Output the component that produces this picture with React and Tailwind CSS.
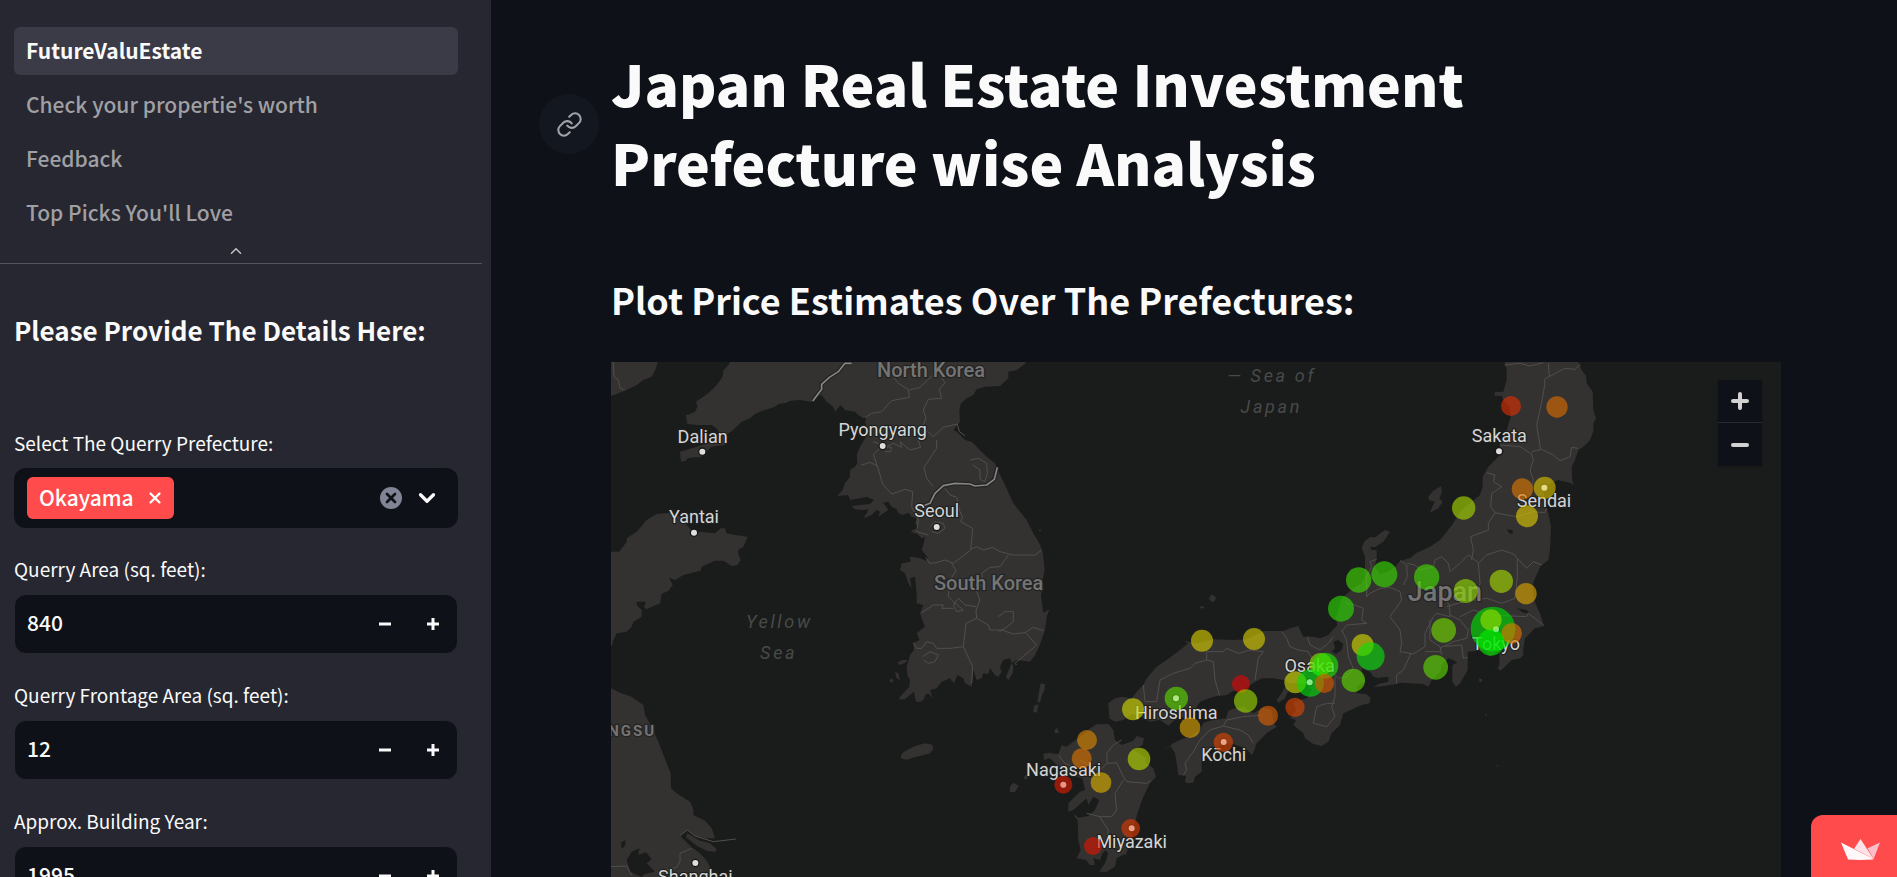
import React, { useState } from "react";
import { ChevronDown, ChevronUp, Link as LinkIcon, X } from "lucide-react";

const pages = ["FutureValuEstate", "Check your propertie's worth", "Feedback", "Top Picks You'll Love"];

function NumberField({ id, label, initial }) {
  const [value, setValue] = useState(initial);
  return (
    <div className="flex flex-col gap-1.5">
      <label htmlFor={id} className="flex h-9 items-center pb-0.5 text-[19px]">{label}</label>
      <div className="flex h-[60px] overflow-hidden rounded-xl border border-[#262730] bg-[#0e1117]">
        <input
          id={id}
          type="number"
          value={value}
          onChange={(e) => setValue(Number(e.target.value))}
          className="min-w-0 flex-1 bg-transparent px-3 pb-0.5 text-[21px] font-medium outline-none [appearance:textfield]"
        />
        <button aria-label={`Decrease ${label}`} onClick={() => setValue(value - 1)} className="flex w-12 items-center justify-center">
          <svg viewBox="0 0 12 12" className="size-3"><path d="M0 6H12" stroke="#fafafa" strokeWidth="3" /></svg>
        </button>
        <button aria-label={`Increase ${label}`} onClick={() => setValue(value + 1)} className="flex w-12 items-center justify-center">
          <svg viewBox="0 0 12 12" className="size-3"><path d="M0 6H12M6 0V12" stroke="#fafafa" strokeWidth="3" /></svg>
        </button>
      </div>
    </div>
  );
}

function Sidebar() {
  const [selected, setSelected] = useState(["Okayama"]);
  return (
    <aside className="w-[491px] shrink-0 overflow-hidden bg-[#262730]">
      <nav className="flex flex-col gap-1.5 pt-[27px] pr-[33px] pl-3.5">
        {pages.map((page, i) => (
          <a
            key={page}
            href="#"
            className={
              i === 0
                ? "flex h-12 items-center rounded-md bg-[#3b3b47] px-3 pb-px text-[21px] font-bold text-[#fafafa]"
                : "flex h-12 items-center rounded-md px-3 pb-px text-[21px] font-medium text-[#a0a0a4]"
            }
          >
            {page}
          </a>
        ))}
      </nav>
      <button aria-label="Collapse navigation" className="flex h-[26px] w-[472px] items-center justify-center pt-0.5 text-[#c3c3c6]">
        <ChevronUp size={18} strokeWidth={2} />
      </button>
      <hr className="mr-[9px] border-[#52535d]" />
      <div className="flex flex-col gap-6 pt-12 pr-[33px] pl-3.5">
        <h2 className="mb-[54px] text-[26px] leading-9 font-bold">Please Provide The Details Here:</h2>
        <div className="flex flex-col gap-1.5">
          <label htmlFor="prefecture" className="flex h-9 items-center pb-0.5 text-[19px]">Select The Querry Prefecture:</label>
          <div className="flex h-[60px] items-center rounded-xl bg-[#0e1117] pr-[18px] pl-[13px]">
            {selected.map((name) => (
              <span key={name} className="flex h-[42px] items-center gap-3 rounded-md bg-[#ff4b4b] pr-2.5 pl-3 text-[21px] font-medium text-white">
                <span className="pb-px">{name}</span>
                <button aria-label={`Remove ${name}`} onClick={() => setSelected([])} className="flex">
                  <X size={18} strokeWidth={3} />
                </button>
              </span>
            ))}
            <input id="prefecture" role="combobox" aria-expanded="false" aria-controls="prefecture-list" className="min-w-0 flex-1 bg-transparent px-2 outline-none" />
            <button aria-label="Clear all" onClick={() => setSelected([])} className="flex size-[22px] items-center justify-center rounded-full bg-[#808495] text-[#0e1117]">
              <X size={16} strokeWidth={4} />
            </button>
            <button aria-label="Open" className="ml-3 flex">
              <ChevronDown size={26} strokeWidth={3} />
            </button>
          </div>
        </div>
        <NumberField id="area" label="Querry Area (sq. feet):" initial={840} />
        <NumberField id="frontage" label="Querry Frontage Area (sq. feet):" initial={12} />
        <NumberField id="year" label="Approx. Building Year:" initial={1995} />
      </div>
    </aside>
  );
}

const land = [
  // Liaoning coast
  "33,36 173,36 168,55 155,80 130,90 110,105 75,122 33,138",
  // Liaodong and the Korean peninsula
  "388,36 388,42 370,62 368,80 350,105 330,125 310,140 288,155 292,170 285,185 270,192 258,195 262,222 290,225 335,225 355,240 350,270 290,290 240,305 243,335 258,332 262,325 280,322 300,322 320,303 335,290 375,285 380,265 378,255 400,240 425,215 450,205 465,192 480,185 525,170 535,162 560,158 570,152 600,150 635,155 650,142 665,135 680,155 700,170 705,185 722,165 735,180 765,185 775,195 790,205 800,200 795,215 805,250 780,290 770,315 772,340 765,350 750,360 750,380 735,400 728,420 712,438 745,435 750,450 780,445 800,440 822,450 810,462 755,468 765,478 790,480 805,478 800,490 790,505 815,495 830,480 840,485 835,500 850,490 865,480 855,465 848,458 865,455 875,470 890,478 895,490 910,495 925,488 935,500 950,505 945,520 955,535 950,550 965,565 975,560 970,585 965,600 985,625 978,632 960,625 945,622 930,620 932,635 905,640 900,660 915,670 925,700 935,715 930,685 945,680 950,730 950,760 970,765 960,790 965,805 975,830 950,850 958,870 940,880 942,900 930,915 920,950 922,975 930,990 928,1010 900,1040 897,1048 915,1048 930,1035 942,1025 948,1055 962,1055 972,1048 975,1035 985,1030 998,1045 990,1020 1010,1015 1025,995 1050,985 1062,1000 1072,975 1090,985 1095,1000 1115,1010 1120,960 1130,990 1145,985 1150,970 1165,972 1170,955 1185,975 1195,980 1205,965 1200,950 1210,930 1230,925 1240,950 1238,970 1225,990 1218,980 1235,940 1250,930 1290,935 1305,915 1315,895 1325,870 1335,840 1340,800 1348,778 1330,788 1323,740 1328,690 1334,660 1328,605 1318,580 1300,550 1280,510 1240,460 1215,405 1200,375 1185,340 1160,320 1140,300 1115,275 1095,270 1070,245 1060,240 1080,215 1078,180 1083,160 1100,145 1120,135 1130,118 1155,110 1200,108 1225,85 1225,65 1250,60 1275,42 1277,36",
  // Shandong
  "33,605 58,605 80,575 80,565 110,545 140,510 170,492 215,488 240,500 265,530 285,550 300,545 345,550 362,535 374,535 380,550 405,555 443,560 430,590 415,600 415,612 422,630 412,645 395,648 370,632 345,632 305,650 302,662 250,675 225,690 207,683 218,705 205,722 185,732 180,760 140,777 132,772 138,755 110,755 110,765 125,780 125,800 100,815 95,830 80,845 50,850 40,870 36,888 33,888",
  // Jiangsu and Shanghai
  "33,1015 60,1028 95,1040 130,1065 135,1095 155,1130 175,1175 200,1240 212,1270 213,1315 230,1330 270,1355 280,1378 280,1395 315,1412 335,1435 345,1465 315,1465 285,1458 262,1440 240,1457 275,1492 300,1510 322,1535 333,1558 345,1600 400,1700 420,1800 330,1860 420,1900 440,2000 400,2150 330,2286 33,2286",
  "262,1450 300,1472 330,1480 350,1497 345,1506 320,1502 290,1487 258,1462",
  // Jeju
  "902,1218 908,1208 925,1198 945,1188 975,1180 997,1184 1000,1198 990,1210 960,1218 935,1224 920,1229 905,1226",
  // Tsushima and small islands
  "1322,1000 1335,1003 1333,1020 1325,1038 1320,1058 1312,1055 1318,1020",
  "1300,1087 1302,1068 1315,1062 1311,1087",
  "1230,1310 1240,1298 1256,1308 1245,1326 1230,1326",
  "1272,1280 1280,1272 1286,1282 1275,1290",
  "1365,1138 1372,1135 1378,1148 1364,1150",
  "1827,745 1835,733 1848,742 1845,752 1835,757",
  "1798,772 1806,768 1814,773 1806,776",
  "1315,540 1323,538 1321,546",
  "892,938 905,930 922,930 918,937 900,945",
  "868,990 876,985 880,995 872,998",
  "885,965 895,970 900,990 890,985",
  "932,543 945,537 955,543 945,552",
  "2637,985 2646,988 2645,997 2638,994",
  "2655,1091 2661,1092 2657,1098",
  "2688,1242 2698,1252 2692,1250",
  // Kyushu
  "1525,1122 1490,1123 1470,1135 1455,1150 1440,1160 1420,1175 1400,1190 1385,1185 1375,1213 1345,1208 1330,1212 1332,1230 1350,1225 1375,1250 1400,1262 1420,1278 1447,1285 1455,1320 1440,1325 1425,1340 1405,1360 1405,1385 1420,1380 1460,1345 1465,1365 1480,1340 1498,1350 1485,1380 1465,1398 1435,1403 1422,1392 1425,1402 1433,1410 1435,1470 1442,1500 1430,1525 1458,1530 1470,1545 1485,1545 1480,1525 1500,1530 1505,1515 1515,1500 1525,1510 1515,1540 1498,1565 1520,1565 1545,1550 1550,1525 1572,1513 1578,1515 1585,1490 1600,1440 1612,1390 1630,1340 1650,1300 1668,1280 1660,1255 1635,1235 1640,1225 1600,1200 1628,1185 1632,1165 1610,1158 1600,1172 1565,1185 1545,1170 1540,1140",
  // Shikoku
  "1685,1205 1720,1180 1745,1168 1765,1162 1800,1140 1810,1118 1840,1110 1878,1105 1885,1082 1905,1075 1930,1070 1960,1090 1990,1072 2015,1080 2022,1122 2030,1130 2000,1150 1985,1165 1970,1180 1965,1195 1957,1215 1935,1195 1900,1182 1880,1178 1850,1190 1820,1210 1805,1228 1805,1265 1785,1280 1780,1298 1762,1300 1755,1295 1758,1278 1735,1275 1730,1240 1725,1210 1712,1188",
  // Awaji
  "2045,1030 2055,1010 2068,1014 2055,1045 2035,1058 2030,1050",
  // Sado
  "2485,440 2500,422 2523,408 2525,430 2518,445 2528,455 2515,475 2490,488 2495,475 2505,455 2487,450",
  // Honshu
  "1525,1060 1545,1045 1565,1040 1595,1045 1610,1025 1630,1005 1640,985 1670,950 1700,930 1740,900 1765,880 1750,872 1790,880 1840,868 1900,870 1940,868 1990,843 2050,843 2070,835 2095,828 2100,840 2110,860 2140,860 2160,865 2185,855 2200,838 2212,825 2207,805 2215,780 2225,745 2260,715 2285,700 2295,680 2295,620 2285,592 2295,572 2310,562 2325,562 2355,540 2370,545 2350,575 2325,592 2310,590 2315,600 2330,600 2330,622 2325,650 2340,672 2365,665 2385,650 2400,633 2430,625 2450,608 2470,600 2490,590 2520,570 2540,545 2560,520 2580,485 2615,455 2640,435 2648,410 2648,380 2665,350 2695,320 2700,280 2720,240 2732,200 2728,170 2710,150 2705,138 2683,137 2685,126 2710,125 2720,90 2720,55 2713,45 2715,36 2935,36 2945,60 2958,78 2960,100 2978,125 2980,180 2988,205 2980,220 2980,245 2970,270 2950,290 2935,300 2925,330 2915,350 2917,392 2920,405 2910,398 2875,390 2850,400 2830,425 2838,470 2845,490 2853,530 2850,600 2845,630 2822,648 2805,685 2798,705 2800,740 2808,765 2820,790 2832,828 2805,835 2775,865 2770,895 2770,915 2760,925 2735,930 2710,955 2700,962 2693,955 2698,945 2698,915 2700,900 2670,920 2650,900 2630,903 2603,905 2603,960 2580,1000 2568,1010 2557,995 2557,945 2572,938 2560,930 2545,925 2525,945 2522,965 2495,990 2485,1010 2470,1002 2400,998 2390,1002 2350,1008 2320,1012 2335,1002 2365,995 2365,982 2340,985 2320,980 2310,965 2285,955 2285,970 2297,995 2272,1008 2270,1030 2300,1033 2312,1045 2308,1060 2285,1065 2230,1090 2220,1125 2195,1150 2185,1175 2165,1188 2140,1182 2115,1165 2110,1150 2080,1125 2088,1110 2070,1105 2088,1080 2080,1055 2120,1045 2135,1020 2115,1000 2070,1000 2050,990 2020,985 1985,985 1950,1005 1930,1020 1900,1022 1880,1035 1840,1040 1800,1055 1785,1080 1760,1105 1735,1100 1705,1127 1680,1110 1650,1115 1625,1100 1595,1092 1570,1110 1545,1115 1528,1105",
];

const water = [
  "80,1530 95,1505 118,1495 115,1515 138,1507 155,1528 140,1540 165,1565 135,1572 125,1581 90,1565",
  "62,1478 76,1470 76,1485 66,1497",
  "2200,875 2215,870 2230,882 2225,900 2208,912 2195,905 2205,895",
  "2720,538 2738,540 2738,552 2728,550",
  "2750,775 2780,780 2788,790 2770,788",
  "2340,982 2366,982 2362,995 2342,997",
];

const borders = [
  "40,36 42,80 55,90 60,115 74,120",
  "795,203 815,190 845,185 875,152 928,142 925,118 895,100 872,70",
  "928,120 960,112 985,88 1000,75",
  "1022,78 1035,98 1018,118 1025,145 985,148 970,180 978,205 968,230 1000,260 1030,232 1072,222 1078,245 1095,257",
  "1010,270 1010,295 990,325 972,352 980,385 1000,410",
  "820,275 860,290 880,280 905,292 900,275 930,300 962,292 955,270 975,258",
  "784,345 810,337 832,348 848,402 875,432 915,418 938,425 935,470 955,510 950,545 985,555",
  "832,350 820,312 845,290 875,292 872,305 855,305",
  "1110,330 1135,325 1160,340 1162,370 1155,395 1140,388 1140,360 1118,345",
  "1035,415 1050,435 1070,442 1080,485 1088,500 1082,515 1118,535 1112,600 1060,640 1035,630 1008,638 988,640 978,622",
  "990,530 1005,515 1030,520 1035,535 1015,550 995,545",
  "1112,598 1130,590 1150,600 1178,592 1200,605 1240,615 1305,615 1325,600",
  "1225,615 1200,650 1170,652 1145,670 1150,700 1128,720 1140,750 1128,780 1130,805 1098,820 1090,890 1118,950 1115,1000",
  "1055,640 1068,662 1050,690 1045,740 1060,755 1090,780 1070,785 1060,765 1075,745 1095,765 1128,770",
  "965,788 1000,765 1030,765 1025,775 1060,775",
  "940,878 950,895 965,895 980,875 1000,880 1010,895 1050,895 1090,890",
  "968,920 990,905 1015,915 1005,935 985,940 970,930",
  "1130,805 1165,825 1170,840 1205,840 1240,852 1275,848 1300,832 1330,842",
  "1278,850 1310,885 1245,940 1250,945",
  "1195,800 1215,785 1240,785 1240,815 1215,835 1198,845",
  "33,1550 80,1548 95,1575",
  "275,1495 240,1510 240,1535 230,1552 200,1560 175,1581",
  // Kyushu
  "1375,1215 1395,1240 1415,1250", "1565,1170 1540,1185 1520,1210 1522,1240 1550,1238 1570,1280 1580,1295 1640,1300 1652,1292",
  "1570,1290 1545,1330 1550,1380 1535,1400 1500,1400 1460,1390", "1500,1402 1525,1440 1522,1465 1540,1485", "1440,1230 1475,1250 1500,1262 1520,1240",
  // Shikoku
  "1755,1240 1780,1205 1800,1170 1830,1140 1870,1128 1920,1140 1945,1155 1960,1180", "1870,1128 1880,1110 1930,1100 1990,1095", "1755,1240 1760,1260 1750,1275",
  // Chugoku
  "1630,1005 1635,1055 1670,1055 1680,990 1720,970 1770,955 1785,940 1820,930 1840,935 1845,990 1858,1035",
  "1820,930 1820,905 1870,905 1880,895 1915,910 1950,900 1990,905 1975,925 1965,990",
  "2045,845 2060,865 2070,890 2095,900 2125,905 2140,935 2120,950 2112,975", "2122,860 2130,885 2160,900 2185,880 2200,860",
  // Kansai and Chubu
  "2225,840 2240,870 2245,920 2260,955 2240,980 2215,985 2200,970", "2205,980 2205,1040 2195,1070 2205,1100 2180,1130 2140,1120 2150,1070 2180,1060 2205,1060",
  "2300,700 2300,740 2310,730 2340,715 2370,712 2400,725 2405,750 2370,800 2400,840 2405,880 2400,905",
  "2240,760 2265,765 2290,775 2285,810 2300,820 2240,825 2225,845",
  "2300,740 2300,680 2315,650 2310,635 2330,628",
  "2400,905 2440,912 2475,890 2475,850 2500,800 2510,790 2550,800 2548,765 2530,740",
  "2432,912 2410,960 2390,975 2390,1000", "2475,905 2520,905 2525,890 2585,885 2590,925 2603,922",
  "2490,810 2490,870 2520,890 2525,915", "2550,795 2580,810 2605,840 2600,865 2560,875 2530,890",
  "2580,800 2620,780 2670,795 2780,800 2785,790 2830,825", "2540,770 2590,755 2660,745 2705,760 2745,745 2752,680 2752,625 2740,612 2705,600 2660,615 2635,640 2640,700 2625,745",
  "2400,632 2420,645 2422,680 2410,705", "2422,640 2445,645 2460,660 2500,650 2505,630 2525,620 2545,640 2550,665 2580,640 2605,615 2635,638",
  "2752,625 2780,655 2800,635 2825,645", "2615,630 2620,600 2612,560 2665,540 2665,520 2685,488 2720,495 2750,500 2800,485 2835,488 2840,475",
  "2660,368 2685,375 2680,395 2705,410 2675,430 2672,470 2685,488", "2700,285 2760,290 2795,312 2800,330 2790,360 2800,390 2795,410",
  "2795,305 2825,298 2860,315 2880,332 2910,320 2915,292 2935,295", "2822,300 2810,225 2820,180 2828,140 2835,100 2832,90 2848,78 2845,40",
  "2715,45 2760,40 2790,48 2830,38", "2848,80 2895,55 2925,58 2942,42",
];

// x, y, radius, colour
const markers = [
  [2733, 168, 30, "#df2e00"], [2871, 171, 32, "#df6c00"], [2767, 417, 32, "#df7800"], [2834, 413, 33, "#dcc000"],
  [2781, 499, 33, "#dfc900"], [2591, 474, 35, "#aadc00"], [2480, 681, 38, "#44df00"], [2704, 694, 35, "#a6dc00"],
  [2597, 723, 36, "#93dc00"], [2778, 731, 32, "#dfa800"], [2679, 837, 67, "#00df00"], [2673, 810, 32, "#95df00"],
  [2735, 850, 31, "#df7500"], [2673, 877, 40, "#00ee00"], [2531, 841, 37, "#72dc00"], [2507, 952, 37, "#5ddc00"],
  [2276, 690, 38, "#42df00"], [2353, 673, 39, "#38df00"], [2223, 776, 39, "#2cdf00"], [1806, 872, 33, "#dcd000"],
  [1962, 867, 33, "#dcd000"], [2288, 885, 33, "#d3dc00"], [2312, 919, 42, "#0cdf0c"], [2162, 943, 34, "#93df00"],
  [2176, 947, 39, "#1ee800"], [2086, 997, 33, "#d3dc00"], [2131, 999, 41, "#00df0c"], [2173, 1000, 29, "#df5800"],
  [2260, 991, 35, "#60dc00"], [1923, 1002, 27, "#df0505"], [1937, 1053, 35, "#9cdc00"], [1729, 1045, 35, "#5ddc00"],
  [1599, 1078, 33, "#d3dc00"], [1770, 1133, 31, "#dfa500"], [2004, 1097, 30, "#df6000"], [2085, 1072, 29, "#df4300"],
  [1870, 1177, 29, "#df4300"], [1461, 1170, 30, "#df8800"], [1445, 1225, 30, "#df7500"], [1617, 1227, 34, "#b8dc00"],
  [1503, 1298, 31, "#dfb000"], [1390, 1304, 27, "#df1c00"], [1592, 1435, 28, "#df3800"], [1479, 1488, 27, "#df1500"],
];

// name, text x, baseline y, dot x, dot y
const cities = [
  ["Dalian", 308, 278, 307, 305], ["Pyongyang", 848, 259, 848, 288], ["Yantai", 282, 520, 282, 548], ["Seoul", 1010, 502, 1010, 531],
  ["Sakata", 2698, 277, 2697, 304], ["Sendai", 2832, 470, 2833, 413], ["Tokyo", 2688, 900, 2688, 838], ["Osaka", 2129, 967, 2129, 997],
  ["Hiroshima", 1729, 1108, 1728, 1045], ["Kōchi", 1871, 1233, 1871, 1176], ["Nagasaki", 1391, 1277, 1390, 1304],
  ["Miyazaki", 1595, 1493, 1595, 1435], ["Shanghai", 286, 1600, 286, 1539],
];

const coveredDots = [[1728, 1045], [1871, 1176], [1390, 1304], [1595, 1435], [2129, 997], [2688, 838], [2833, 413]];

const borderRivers = "M755 40L735 40L715 65L688 82L665 103L665 118L638 153M970 467L990 460L1005 430L1030 407L1065 400L1110 402L1125 408L1160 405L1183 388L1192 352";

function PrefectureMap() {
  return (
    <div className="relative h-[750px] overflow-hidden bg-[#1a1c1b]">
      <svg viewBox="33 36 3510 2250" preserveAspectRatio="xMidYMid slice" className="block size-full" role="img" aria-label="Plot price estimates map of Japan">
        <g fill="#343230">{land.map((p) => <polygon key={p} points={p} />)}</g>
        <g fill="#1a1c1b">{water.map((p) => <polygon key={p} points={p} />)}</g>
        <g fill="none" stroke="#504f4e" strokeWidth="3" strokeLinejoin="round">
          {borders.map((p) => <polyline key={p} points={p} />)}
          <polyline points="240,1457 262,1440 285,1458 340,1475 408,1467" />
        </g>
        <g fill="none" strokeLinejoin="round">
          <path d={borderRivers} stroke="#222322" strokeWidth="12" />
          <path d={borderRivers} stroke="#858585" strokeWidth="5" />
        </g>
        <g textAnchor="middle" className="font-['Roboto',sans-serif]" strokeLinejoin="round">
          <g fill="#484a49" fontSize="54" fontStyle="italic" letterSpacing="8">
            <text x="538" y="833">Yellow</text>
            <text x="536" y="926">Sea</text>
            <text x="2015" y="96">— Sea of</text>
            <text x="2014" y="189">Japan</text>
          </g>
          <g fill="#747474" stroke="#242424" strokeWidth="8" paintOrder="stroke">
            <text x="993" y="81" fontSize="60" fontWeight="500">North Korea</text>
            <text x="1166" y="719" fontSize="60" fontWeight="500">South Korea</text>
            <text x="2535" y="752" fontSize="81" fontWeight="500">Japan</text>
            <text x="53" y="1158" fontSize="45" fontWeight="700" letterSpacing="6">JIANGSU</text>
          </g>
          <g fill="#d5d5d5" stroke="#1e1f1e" strokeWidth="7" paintOrder="stroke" fontSize="54">
            {cities.map(([name, x, y]) => <text key={name} x={x} y={y}>{name}</text>)}
          </g>
        </g>
        <g fill="#dedede" stroke="#161616" strokeWidth="4">
          {cities.map(([name, , , x, y]) => <circle key={name} cx={x} cy={y} r="11" />)}
        </g>
        <g fillOpacity="0.62">{markers.map(([x, y, r, c]) => <circle key={`${x}-${y}`} cx={x} cy={y} r={r} fill={c} />)}</g>
        <g fill="#fff" fillOpacity="0.3">
          {coveredDots.map(([x, y]) => <circle key={`${x}-${y}`} cx={x} cy={y} r="9" />)}
        </g>
      </svg>
      <div className="absolute top-[18px] right-[19px] flex w-11 flex-col divide-y divide-[#2a2b33] bg-[#0e1117] shadow">
        <button aria-label="Zoom in" className="flex h-[43px] items-center justify-center">
          <svg viewBox="0 0 18 18" className="size-[18px]"><path d="M2 9H16M9 2V16" stroke="#d2d2d2" strokeWidth="4" strokeLinecap="round" /></svg>
        </button>
        <button aria-label="Zoom out" className="flex h-[43px] items-center justify-center">
          <svg viewBox="0 0 18 18" className="size-[18px]"><path d="M2 9H16" stroke="#d2d2d2" strokeWidth="4" strokeLinecap="round" /></svg>
        </button>
      </div>
    </div>
  );
}

export default function App() {
  return (
    <div className="relative flex h-screen overflow-hidden bg-[#0e1117] font-['Noto_Sans_CJK_JP',sans-serif] text-[#fafafa]">
      <Sidebar />
      <main className="min-w-0 flex-1 overflow-y-auto pt-[43px] pr-[116px] pl-[120px] [scrollbar-width:none]">
        <div className="relative">
          <h1 className="text-[57px] leading-[79px] font-black">
            Japan Real Estate Investment<br />Prefecture wise Analysis
          </h1>
          <a href="#title" aria-label="Link to heading" className="absolute top-[51px] -left-[72px] flex size-[60px] items-center justify-center rounded-full bg-[#131720] text-[#a3a4a7]">
            <LinkIcon size={27} strokeWidth={1.8} />
          </a>
        </div>
        <h2 className="mt-[71px] mb-[35px] text-[36px] leading-[55px] font-bold">Plot Price Estimates Over The Prefectures:</h2>
        <PrefectureMap />
      </main>
      <a href="#streamlit" aria-label="Hosted with Streamlit" className="absolute right-0 bottom-0 flex h-[62px] w-[86px] items-center justify-center rounded-tl-xl bg-[#ff4b4b] pt-[6px] pl-3">
        <svg viewBox="1383 716 116 62" className="h-[21px] w-[39px]">
          <path d="M1441 716L1422 745L1480 775Z" fill="#ffe1e8" />
          <path d="M1499 726L1462 743L1480 775Z" fill="#ffbdc9" />
          <path d="M1383 726L1480 775L1478 777Q1440 779 1404 777Z" fill="#fff8f8" />
        </svg>
      </a>
    </div>
  );
}
